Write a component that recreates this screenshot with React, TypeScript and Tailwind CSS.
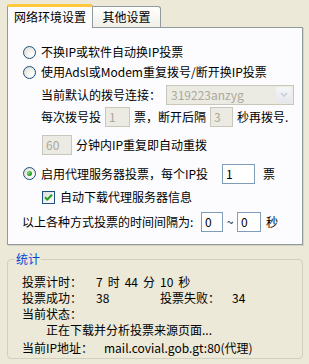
import React from "react";

const font = { fontFamily: '"Noto Sans CJK SC", "DejaVu Sans", sans-serif' };

function Radio({ checked }: { checked?: boolean }) {
  return (
    <span className="flex h-[13px] w-[13px] shrink-0 items-center justify-center rounded-full border border-[#1C5180] bg-[radial-gradient(circle_at_70%_70%,#ffffff_0%,#f0f0ea_45%,#d6d6ce_100%)]">
      {checked ? (
        <span className="h-[5px] w-[5px] rounded-full bg-[radial-gradient(circle_at_35%_35%,#7be07b_0%,#21a121_60%,#1a8a1a_100%)]" />
      ) : null}
    </span>
  );
}

function Checkbox() {
  return (
    <span className="flex h-[13px] w-[13px] shrink-0 items-center justify-center border border-[#1C5180] bg-[linear-gradient(135deg,#dcdcd7,#ffffff)]">
      <svg width="9" height="9" viewBox="0 0 9 9">
        <path d="M1 4.2 L3.3 6.5 L8 1.8" fill="none" stroke="#21A121" strokeWidth="2" />
      </svg>
    </span>
  );
}

function Field({ value, w, disabled }: { value: string; w: string; disabled?: boolean }) {
  return (
    <span
      className={`flex h-[20px] shrink-0 items-center border px-[3px] text-[12px] ${w} ${
        disabled
          ? "border-[#C9C7BA] bg-[#EBEBE4] text-[#ACA899]"
          : "border-[#7F9DB9] bg-white text-black"
      }`}
    >
      {value}
    </span>
  );
}

export default function App() {
  return (
    <div
      className="h-[364px] w-[309px] overflow-hidden bg-[#ECE9D8] text-[12px] leading-[16px] text-black"
      style={font}
    >
      <div className="pl-[7px] pr-[6px] pt-[4px]">
        {/* tabs */}
        <div className="relative z-10 flex h-[23px] items-end">
          <div className="mb-[-1px] flex h-[24px] w-[86px] items-center justify-center rounded-t-[3px] border-x border-t-[3px] border-x-[#919B9C] border-t-[#FFC83C] bg-[#FCFCFE] pb-[2px]">
            网络环境设置
          </div>
          <div className="flex h-[21px] w-[68px] items-center justify-center rounded-tr-[3px] border-r border-t border-[#919B9C] bg-[linear-gradient(#ffffff,#f0efe8)]">
            其他设置
          </div>
        </div>

        {/* panel */}
        <div className="h-[218px] border border-[#919B9C] bg-[#FCFCFE] shadow-[1px_1px_0_#D6D3C4]">
          <div className="mt-[14px] flex h-[20px] items-center gap-[5px] pl-[15px]">
            <Radio />
            <span>不换IP或软件自动换IP投票</span>
          </div>
          <div className="flex h-[20px] items-center gap-[5px] pl-[15px]">
            <Radio />
            <span>使用Adsl或Modem重复拨号/断开换IP投票</span>
          </div>
          <div className="mt-[3px] flex h-[20px] items-center pl-[33px]">
            <span className="w-[125px]">当前默认的拨号连接：</span>
            <span className="flex h-[20px] w-[128px] items-center justify-between border border-[#C9C7BA] bg-[#EBEBE4] pl-[4px] pr-[1px] text-[#ACA899]">
              <span>319223anzyg</span>
              <span className="flex h-[16px] w-[16px] items-center justify-center rounded-[2px] bg-[linear-gradient(#f5f6f8,#e4e6eb)]">
                <svg width="8" height="6" viewBox="0 0 8 6">
                  <path d="M1 1 L4 4 L7 1" fill="none" stroke="#C9CCD6" strokeWidth="1.6" />
                </svg>
              </span>
            </span>
          </div>
          <div className="mt-[1px] flex h-[21px] items-center pl-[33px]">
            <span className="w-[64px]">每次拨号投</span>
            <Field value="1" w="w-[25px]" disabled />
            <span className="w-[80px] pl-[4px]">票，断开后隔</span>
            <Field value="3" w="w-[23px]" disabled />
            <span className="pl-[4px]">秒再拨号.</span>
          </div>
          <div className="mt-[8px] flex h-[20px] items-center pl-[34px]">
            <Field value="60" w="w-[30px]" disabled />
            <span className="pl-[4px]">分钟内IP重复即自动重拨</span>
          </div>
          <div className="mt-[8px] flex h-[21px] items-center pl-[15px]">
            <Radio checked />
            <span className="w-[186px] pl-[5px]">启用代理服务器投票，每个IP投</span>
            <Field value="1" w="w-[33px]" />
            <span className="pl-[8px]">票</span>
          </div>
          <div className="mt-[5px] flex h-[16px] items-center gap-[5px] pl-[34px]">
            <Checkbox />
            <span>自动下载代理服务器信息</span>
          </div>
          <div className="mt-[7px] flex h-[20px] items-center pl-[14px]">
            <span className="w-[179px]">以上各种方式投票的时间间隔为:</span>
            <Field value="0" w="w-[22px]" />
            <span className="w-[14px] text-center">~</span>
            <Field value="0" w="w-[24px]" />
            <span className="pl-[5px]">秒</span>
          </div>
        </div>
      </div>

      {/* stats */}
      <fieldset className="ml-[7px] mt-[6px] w-[296px] rounded-[4px] border border-[#D0D0BF] pb-[2px] pl-[14px]">
        <legend className="ml-[-7px] px-[1px] leading-[16px] text-[#0046D5]">统计</legend>
        <div className="mt-[7px] flex h-[16px] items-center">
          <span className="w-[74px]">投票计时：</span>
          <span className="flex gap-[5px]">
            <span>7</span>
            <span>时</span>
            <span>44</span>
            <span>分</span>
            <span>10</span>
            <span>秒</span>
          </span>
        </div>
        <div className="flex h-[16px] items-center">
          <span className="w-[74px]">投票成功：</span>
          <span className="w-[64px]">38</span>
          <span className="w-[72px]">投票失败：</span>
          <span>34</span>
        </div>
        <div className="flex h-[16px] items-center">
          <span>当前状态：</span>
        </div>
        <div className="flex h-[16px] items-center pl-[24px]">
          <span>正在下载并分析投票来源页面...</span>
        </div>
        <div className="mt-[2px] flex h-[16px] items-center">
          <span className="w-[82px]">当前IP地址：</span>
          <span>mail.covial.gob.gt:80(代理)</span>
        </div>
      </fieldset>
    </div>
  );
}
